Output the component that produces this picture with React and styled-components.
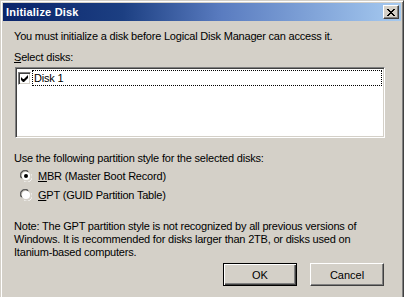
import React from "react";
import styled, { createGlobalStyle } from "styled-components";

const Global = createGlobalStyle`
  html, body { margin: 0; padding: 0; background: #d4d0c8; }
  body { font-family: "Liberation Sans", Arial, sans-serif; font-size: 11px; color: #000; }
  #root { width: 404px; height: 297px; overflow: hidden; }
`;

const Window = styled.div`
  width: 404px;
  height: 310px;
  box-sizing: border-box;
  background: #d4d0c8;
  border-top: 1px solid #d4d0c8;
  border-left: 1px solid #d4d0c8;
  border-right: 1px solid #404040;
  border-bottom: 1px solid #404040;
  box-shadow: inset 1px 1px 0 #ffffff, inset -1px -1px 0 #808080;
  padding: 2px;
  display: flex;
  flex-direction: column;
`;

const TitleBar = styled.div`
  height: 18px;
  display: flex;
  align-items: center;
  justify-content: space-between;
  padding: 0 2px 0 3px;
  background: linear-gradient(to right, #0a246a 0%, #1c3f82 30%, #5a7cc0 55%, #a6caf0 100%);
`;

const Title = styled.span`
  color: #fff;
  font-weight: bold;
  font-size: 11px;
  letter-spacing: 0.2px;
`;

const CloseButton = styled.div`
  width: 16px;
  height: 14px;
  box-sizing: border-box;
  background: #d4d0c8;
  border-top: 1px solid #ffffff;
  border-left: 1px solid #ffffff;
  border-right: 1px solid #404040;
  border-bottom: 1px solid #404040;
  box-shadow: inset -1px -1px 0 #808080;
  display: flex;
  align-items: center;
  justify-content: center;
`;

const Body = styled.div`
  padding: 9px 16px 0 11px;
  display: flex;
  flex-direction: column;
  letter-spacing: -0.2px;
`;

const Text = styled.div`
  line-height: 13px;
  margin-top: ${(p) => p.$mt || 0}px;
  white-space: ${(p) => (p.$wrap ? "normal" : "nowrap")};
`;

const U = styled.span`
  text-decoration: underline;
  text-underline-offset: 1px;
`;

const ListBox = styled.div`
  margin: 3px 0 0 1px;
  width: 370px;
  height: 71px;
  box-sizing: border-box;
  background: #fff;
  border-top: 1px solid #808080;
  border-left: 1px solid #808080;
  border-right: 1px solid #ffffff;
  border-bottom: 1px solid #ffffff;
  box-shadow: inset 1px 1px 0 #404040, inset -1px -1px 0 #d4d0c8;
  padding: 2px 2px 0 2px;
`;

const ListRow = styled.div`
  display: flex;
  align-items: center;
  height: 16px;
`;

const CheckBox = styled.div`
  width: 13px;
  height: 13px;
  box-sizing: border-box;
  background: #fff;
  border-top: 1px solid #808080;
  border-left: 1px solid #808080;
  border-right: 1px solid #ffffff;
  border-bottom: 1px solid #ffffff;
  box-shadow: inset 1px 1px 0 #404040, inset -1px -1px 0 #d4d0c8;
  display: flex;
  align-items: center;
  justify-content: center;
  flex: none;
`;

const FocusItem = styled.div`
  margin-left: 1px;
  flex: 1;
  height: 16px;
  box-sizing: border-box;
  border: 1px dotted #000;
  padding-left: 1px;
  line-height: 14px;
`;

const RadioRow = styled.div`
  display: flex;
  align-items: center;
  height: 19px;
  padding-left: 6px;
  gap: 6px;
  margin-top: ${(p) => p.$mt || 0}px;
`;

const ButtonRow = styled.div`
  display: flex;
  justify-content: flex-end;
  gap: 13px;
  margin-top: 4px;
  padding-right: 1px;
`;

const Button = styled.div`
  width: 74px;
  height: 23px;
  box-sizing: border-box;
  display: flex;
  align-items: center;
  justify-content: center;
  letter-spacing: 0;
  background: #d4d0c8;
  border: 1px solid ${(p) => (p.$default ? "#000" : "transparent")};
  border-color: ${(p) => (p.$default ? "#000" : "#fff #404040 #404040 #fff")};
  box-shadow: ${(p) =>
    p.$default
      ? "inset 1px 1px 0 #fff, inset -1px -1px 0 #404040, inset -2px -2px 0 #808080"
      : "inset -1px -1px 0 #808080, inset 1px 1px 0 #d4d0c8"};
`;

const Radio = ({ checked }) => (
  <svg width="12" height="12" viewBox="0 0 12 12" style={{ flex: "none" }}>
    <path d="M1 8 A5 5 0 0 1 8 1" fill="none" stroke="#808080" strokeWidth="1" />
    <path d="M2 8.5 A4 4 0 0 1 8.5 2" fill="none" stroke="#404040" strokeWidth="1" />
    <circle cx="6" cy="6" r="4" fill="#fff" />
    <path d="M11 4 A5 5 0 0 1 4 11" fill="none" stroke="#ffffff" strokeWidth="1" />
    <path d="M10 3.5 A4 4 0 0 1 3.5 10" fill="none" stroke="#d4d0c8" strokeWidth="1" />
    {checked && <circle cx="6" cy="6" r="2" fill="#000" />}
  </svg>
);

export default function App() {
  return (
    <>
      <Global />
      <Window>
        <TitleBar>
          <Title>Initialize Disk</Title>
          <CloseButton>
            <svg width="8" height="7" viewBox="0 0 8 7">
              <path
                d="M0 0h2v1h1v1h2v-1h1v-1h2v1h-1v1h-1v1h-1v1h1v1h1v1h1v1h-2v-1h-1v-1h-2v1h-1v1h-2v-1h1v-1h1v-1h1v-1h-1v-1h-1v-1h-1z"
                fill="#000"
              />
            </svg>
          </CloseButton>
        </TitleBar>
        <Body>
          <Text>You must initialize a disk before Logical Disk Manager can access it.</Text>
          <Text $mt={8}>
            <U>S</U>elect disks:
          </Text>
          <ListBox>
            <ListRow>
              <CheckBox>
                <svg width="7" height="7" viewBox="0 0 7 7">
                  <path d="M0 2v3l2 2h1l4-4v-3l-4 4h-1z" fill="#000" />
                </svg>
              </CheckBox>
              <FocusItem>Disk 1</FocusItem>
            </ListRow>
          </ListBox>
          <Text $mt={14}>Use the following partition style for the selected disks:</Text>
          <RadioRow $mt={1}>
            <Radio checked />
            <span>
              <U>M</U>BR (Master Boot Record)
            </span>
          </RadioRow>
          <RadioRow>
            <Radio />
            <span>
              <U>G</U>PT (GUID Partition Table)
            </span>
          </RadioRow>
          <Text $mt={16} $wrap>
            Note: The GPT partition style is not recognized by all previous versions of
            <br />
            Windows. It is recommended for disks larger than 2TB, or disks used on
            <br />
            Itanium-based computers.
          </Text>
          <ButtonRow>
            <Button $default>OK</Button>
            <Button>Cancel</Button>
          </ButtonRow>
        </Body>
      </Window>
    </>
  );
}
